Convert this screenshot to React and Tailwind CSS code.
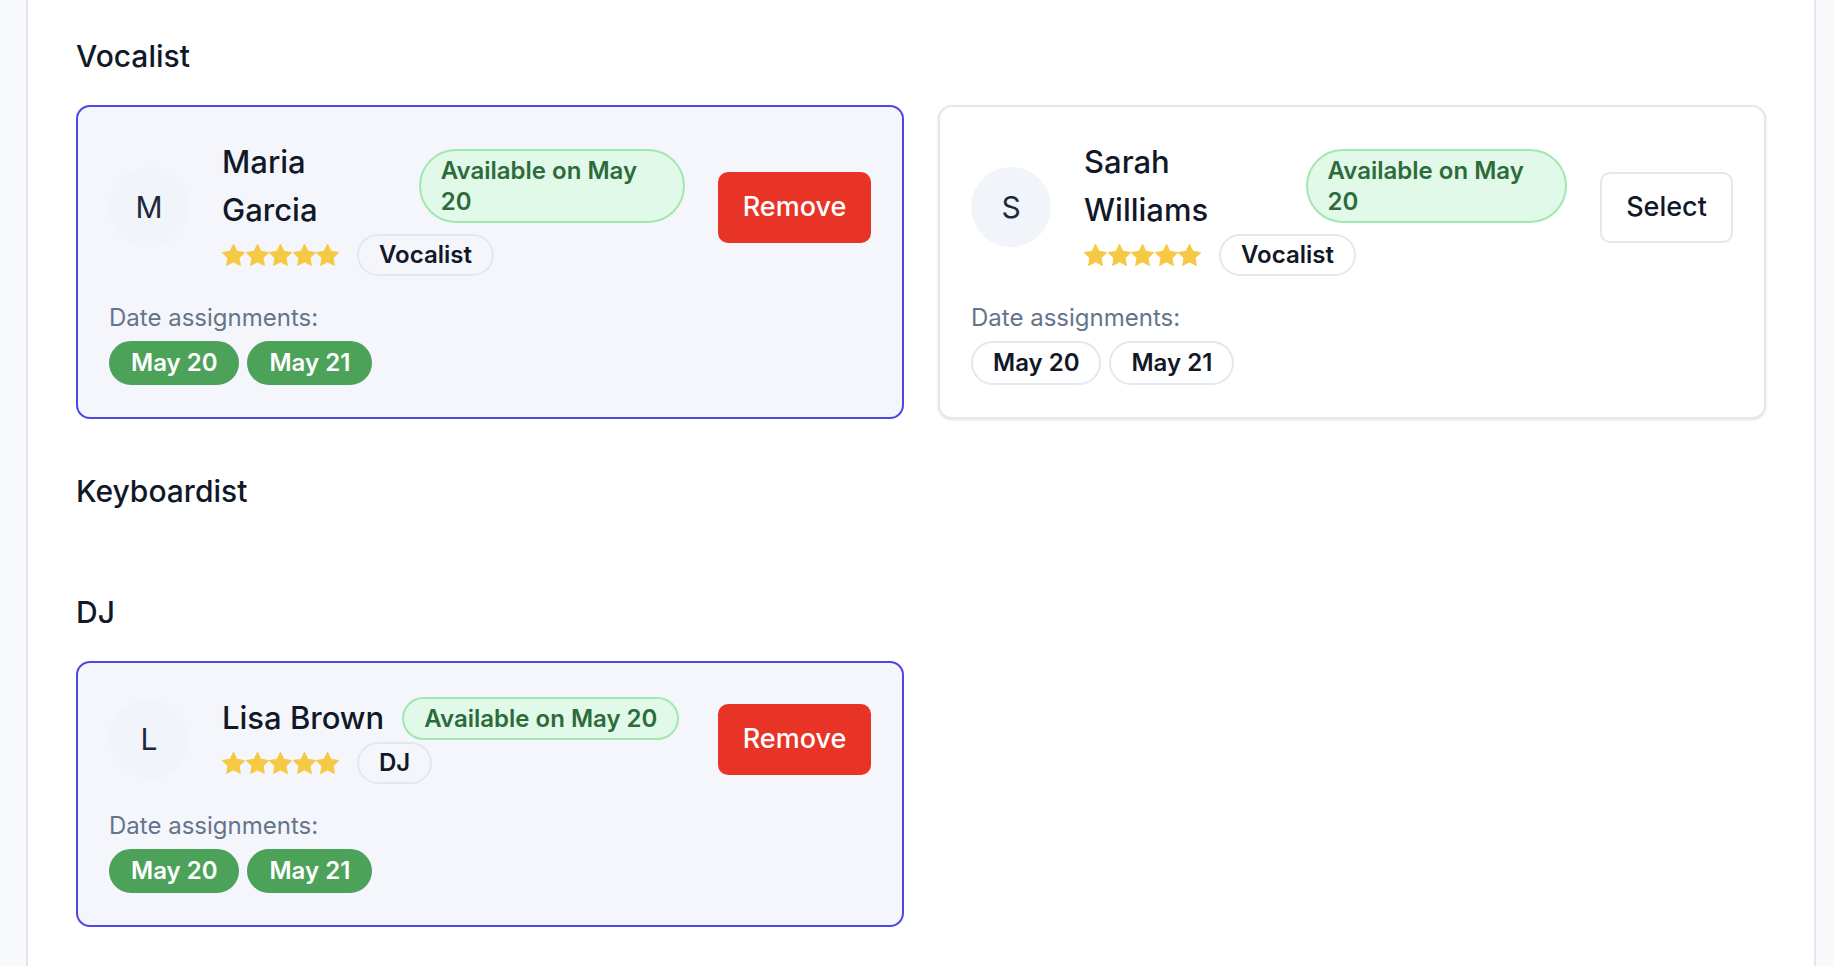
import React from "react";

const FONT = { fontFamily: "Inter, 'Noto Sans', 'Liberation Sans', sans-serif" };

function Star() {
  return (
    <svg width="23" height="23" viewBox="1.5 1.5 21 21" className="block">
      <polygon
        points="12,2 15.09,8.26 22,9.27 17,14.14 18.18,21.02 12,17.77 5.82,21.02 7,14.14 2,9.27 8.91,8.26"
        fill="#f5c944"
        stroke="#f5c944"
        strokeWidth="1"
        strokeLinejoin="round"
      />
    </svg>
  );
}

function Card({ initial, name, role, selected }) {
  return (
    <div
      className={
        selected
          ? "rounded-[14px] border-2 border-[#4f46e5] bg-[#f5f6fc] px-[31px] pt-[31px] pb-[32px]"
          : "rounded-[14px] border-2 border-[#e2e8f0] bg-white px-[31px] pt-[31px] pb-[32px] shadow-sm"
      }
    >
      <div className="flex items-center gap-[33px]">
        <div className="flex h-[80px] w-[80px] shrink-0 items-center justify-center rounded-full bg-[#f1f4f9] text-[30px] text-[#1e293b]">
          {initial}
        </div>
        <div className="flex min-w-0 flex-1 flex-col">
          <div className="flex items-center gap-[18px]">
            <div className="text-[31px] font-medium leading-[48px] text-[#111827]">{name}</div>
            <div className="rounded-full border-2 border-[#a0e8b0] bg-[#e1f9e8] px-[20px] py-[4px] text-[24px] font-semibold leading-[31px] text-[#2e6b3c]">
              Available on May 20
            </div>
          </div>
          <div className="flex items-center gap-[18px]">
            <div className="flex items-center gap-[0.5px]">
              <Star />
              <Star />
              <Star />
              <Star />
              <Star />
            </div>
            <div className="flex h-[42px] items-center rounded-full border-2 border-[#e2e8f0] px-[20px] text-[24px] font-semibold leading-[30px] text-[#111827]">
              {role}
            </div>
          </div>
        </div>
        {selected ? (
          <button className="flex h-[71px] w-[153px] shrink-0 items-center justify-center rounded-[10px] bg-[#e83426] text-[27px] font-medium text-white">
            Remove
          </button>
        ) : (
          <button className="flex h-[71px] w-[133px] shrink-0 items-center justify-center rounded-[10px] border-2 border-[#e2e8f0] bg-white text-[27px] font-medium text-[#111827]">
            Select
          </button>
        )}
      </div>
      <div className="mt-[27px] text-[24px] leading-[30px] text-[#64748b]">Date assignments:</div>
      <div className="mt-[8px] flex gap-[8px]">
        {["May 20", "May 21"].map((d) => (
          <span
            key={d}
            className={
              selected
                ? "inline-flex h-[44px] items-center rounded-full border-2 border-[#4da25a] bg-[#4da25a] px-[20px] text-[24px] font-semibold text-white"
                : "inline-flex h-[44px] items-center rounded-full border-2 border-[#e2e8f0] bg-white px-[20px] text-[24px] font-semibold text-[#111827]"
            }
          >
            {d}
          </span>
        ))}
      </div>
    </div>
  );
}

function Section({ title, children }) {
  return (
    <section>
      <h2 className="mb-[26px] text-[30px] font-medium leading-[45px] text-[#111827]">{title}</h2>
      <div className="grid grid-cols-2 gap-[34px]">{children}</div>
    </section>
  );
}

export default function App() {
  return (
    <div className="min-h-screen w-full overflow-hidden bg-[#f8f9fb]" style={FONT}>
      <div className="ml-[26px] min-h-[966px] w-[1790px] border-x-2 border-[#e3e6ee] bg-white px-[48px] pt-[34px]">
        <div className="flex flex-col gap-[50px]">
          <Section title="Vocalist">
            <Card initial="M" name="Maria Garcia" role="Vocalist" selected />
            <Card initial="S" name="Sarah Williams" role="Vocalist" />
          </Section>
          <Section title="Keyboardist" />
          <Section title="DJ">
            <Card initial="L" name="Lisa Brown" role="DJ" selected />
          </Section>
        </div>
      </div>
    </div>
  );
}
